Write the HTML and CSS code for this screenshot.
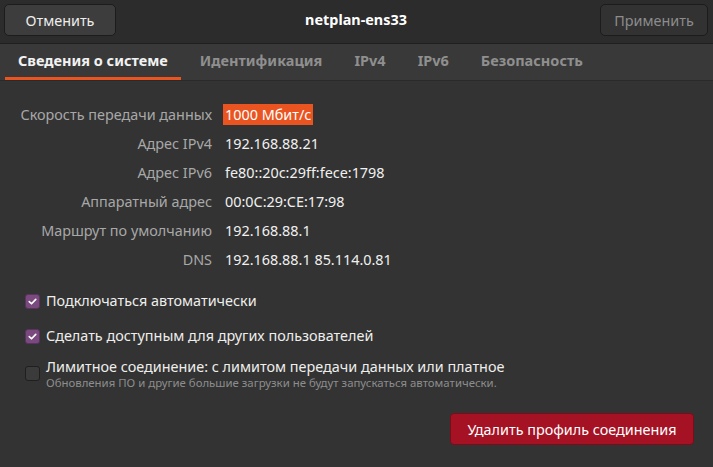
FILE: index.html
```html
<!DOCTYPE html>
<html lang="ru">
<head>
<meta charset="utf-8">
<title>netplan-ens33</title>
<link rel="stylesheet" href="styles.css">
</head>
<body>
<div class="window">
  <header class="headerbar">
    <button class="btn btn-cancel">Отменить</button>
    <div class="title">netplan-ens33</div>
    <button class="btn btn-apply">Применить</button>
  </header>
  <nav class="tabs">
    <div class="tab active">Сведения о системе</div>
    <div class="tab">Идентификация</div>
    <div class="tab">IPv4</div>
    <div class="tab">IPv6</div>
    <div class="tab">Безопасность</div>
  </nav>
  <main class="content">
    <div class="info">
      <div class="label">Скорость передачи данных</div>
      <div class="value"><span class="sel">1000 Мбит/с</span></div>
      <div class="label">Адрес IPv4</div>
      <div class="value">192.168.88.21</div>
      <div class="label">Адрес IPv6</div>
      <div class="value">fe80::20c:29ff:fece:1798</div>
      <div class="label">Аппаратный адрес</div>
      <div class="value">00:0C:29:CE:17:98</div>
      <div class="label">Маршрут по умолчанию</div>
      <div class="value">192.168.88.1</div>
      <div class="label">DNS</div>
      <div class="value">192.168.88.1 85.114.0.81</div>
    </div>
    <div class="checks">
      <div class="check-row">
        <span class="box checked"><svg viewBox="0 0 16 16" width="16" height="16"><path d="M4 8.2 L6.8 10.8 L12 5.4" fill="none" stroke="#fff" stroke-width="2" stroke-linecap="round" stroke-linejoin="round"/></svg></span>
        <span class="check-text">Подключаться автоматически</span>
      </div>
      <div class="check-row">
        <span class="box checked"><svg viewBox="0 0 16 16" width="16" height="16"><path d="M4 8.2 L6.8 10.8 L12 5.4" fill="none" stroke="#fff" stroke-width="2" stroke-linecap="round" stroke-linejoin="round"/></svg></span>
        <span class="check-text">Сделать доступным для других пользователей</span>
      </div>
      <div class="check-row multi">
        <span class="box"></span>
        <span class="check-lines">
          <span class="check-text">Лимитное соединение: с лимитом передачи данных или платное</span>
          <span class="check-sub">Обновления ПО и другие большие загрузки не будут запускаться автоматически.</span>
        </span>
      </div>
    </div>
    <div class="actions">
      <button class="btn-delete">Удалить профиль соединения</button>
    </div>
  </main>
</div>
</body>
</html>
```

FILE: styles.css
```css
* { box-sizing: border-box; }
html, body {
  margin: 0;
  padding: 0;
  background: #333333;
  width: 713px;
  height: 467px;
  overflow: hidden;
  font-family: "Noto Sans", "DejaVu Sans", sans-serif;
  font-size: 14.4px;
  color: #eeeeec;
}
.window {
  width: 713px;
  height: 467px;
  display: flex;
  flex-direction: column;
}
.headerbar {
  height: 44px;
  background: #2c2c2c;
  border-bottom: 1px solid #1f1f1f;
  display: grid;
  grid-template-columns: 1fr auto 1fr;
  align-items: start;
  padding: 4px 5px 0 4px;
}
.btn {
  font-family: inherit;
  font-size: 14.4px;
  height: 32px;
  border-radius: 5px;
  border: 1px solid #1c1c1c;
  padding: 0;
}
.btn-cancel {
  width: 112px;
  background: #3d3d3d;
  color: #eeeeec;
  justify-self: start;
}
.btn-apply {
  width: 108px;
  background: #323232;
  color: #8c8c8c;
  justify-self: end;
}
.title {
  font-weight: bold;
  color: #ffffff;
  line-height: 32px;
  font-size: 14.4px;
}
.tabs {
  height: 37px;
  background: #393939;
  border-bottom: 1px solid #2a2a2a;
  display: flex;
  gap: 6px;
  padding-left: 5px;
}
.tab {
  padding: 0 13px;
  font-weight: bold;
  font-size: 14.5px;
  color: #8f8f8f;
  line-height: 33px;
  border-bottom: 3px solid transparent;
}
.tab.active {
  color: #f2f2f2;
  border-bottom-color: #e95420;
}
.content {
  flex: 1;
  display: flex;
  flex-direction: column;
  padding-top: 19px;
}
.info {
  display: grid;
  grid-template-columns: 212px auto;
  column-gap: 13px;
  grid-auto-rows: 29px;
  align-items: center;
}
.label {
  text-align: right;
  color: #a8a8a8;
}
.value {
  color: #f0f0f0;
}
.sel {
  background: #e95420;
  color: #ffffff;
  margin-left: -2px;
  padding: 1px 2px;
}
.checks {
  display: flex;
  flex-direction: column;
  gap: 15px;
  padding-left: 25px;
  margin-top: 17px;
}
.check-row {
  display: flex;
  align-items: center;
  gap: 6px;
  height: 20px;
}
.check-row.multi {
  height: 31px;
  margin-top: -3px;
}
.box {
  width: 15px;
  height: 15px;
  border-radius: 3px;
  background: #3b3b3b;
  border: 1px solid #1f1f1f;
  display: flex;
  align-items: center;
  justify-content: center;
  flex: none;
}
.box svg { width: 13px; height: 13px; }
.box.checked {
  background: #7a4a7e;
  border-color: #5b3260;
}
.check-lines {
  display: flex;
  flex-direction: column;
}
.check-text {
  color: #eeeeec;
  line-height: 18px;
}
.check-sub {
  font-size: 11.4px;
  color: #8d8d8d;
  line-height: 13px;
}
.actions {
  display: flex;
  justify-content: flex-end;
  padding-right: 19px;
  margin-top: 24px;
}
.btn-delete {
  width: 244px;
  height: 32px;
  background: #a51224;
  color: #ffffff;
  border: 1px solid #7a0d1a;
  border-radius: 4px;
  font-family: inherit;
  font-size: 14.4px;
}
```
